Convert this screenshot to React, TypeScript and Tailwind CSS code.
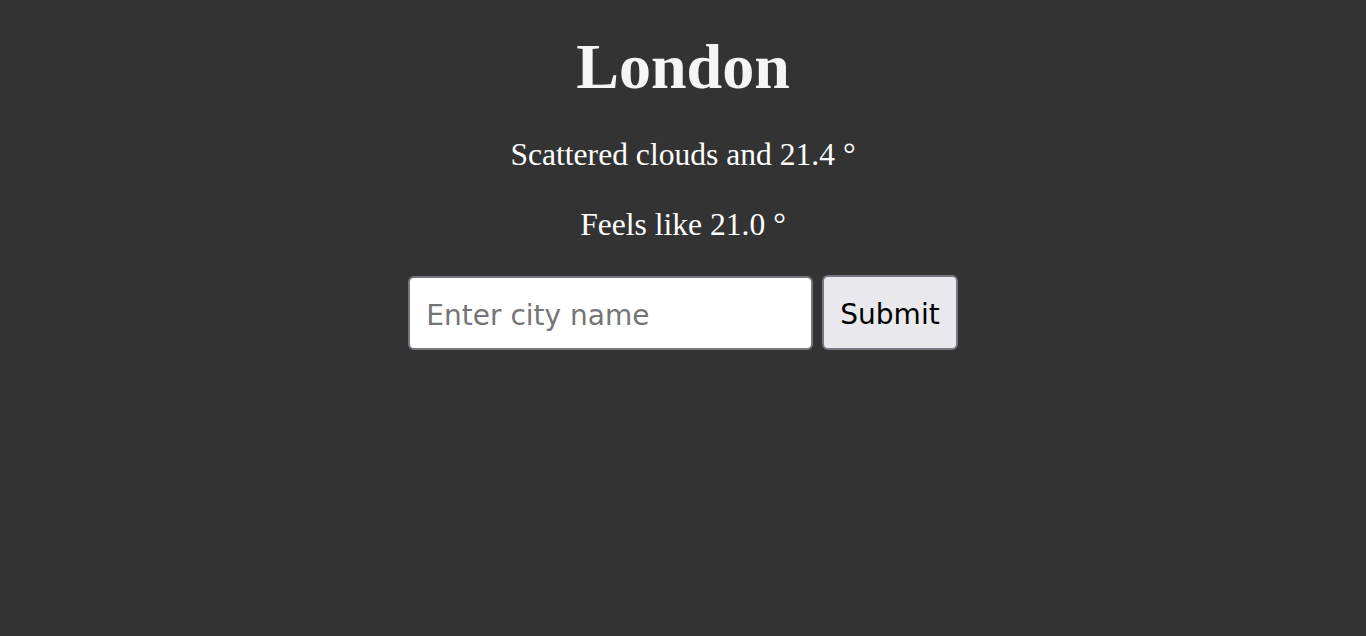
import { useState } from "react";

const App = () => {
  const [city, setCity] = useState("");

  const handleSubmit = (e: any) => {
    e.preventDefault();
  };

  return (
    <div className="min-h-screen bg-[#333333] flex flex-col items-center pt-[30px]">
      <h1 className="text-[64px] leading-[74px] font-bold text-[#f5f5f5] font-['Liberation_Serif',serif]">
        London
      </h1>
      <p className="mt-[33px] text-[31.6px] leading-[36px] text-white font-['Liberation_Serif',serif]">
        Scattered clouds and 21.4 °
      </p>
      <p className="mt-[34px] text-[31.6px] leading-[36px] text-white font-['Liberation_Serif',serif]">
        Feels like 21.0 °
      </p>

      <form onSubmit={handleSubmit} className="mt-[32px] flex items-end gap-[9px] font-['DejaVu_Sans',sans-serif]">
        <input
          type="text"
          value={city}
          onChange={(e) => setCity(e.target.value)}
          placeholder="Enter city name"
          className="w-[405px] h-[74px] bg-white border-2 border-[#767680] rounded-[6px] px-4 pt-[4px] text-[28px] text-black placeholder:text-[#757575] outline-none"
        />
        <button
          type="submit"
          className="h-[75px] px-[16px] pt-[4px] bg-[#e9e9ed] border-2 border-[#767680] rounded-[6px] text-[28px] text-black"
        >
          Submit
        </button>
      </form>
    </div>
  );
};

export default App;
